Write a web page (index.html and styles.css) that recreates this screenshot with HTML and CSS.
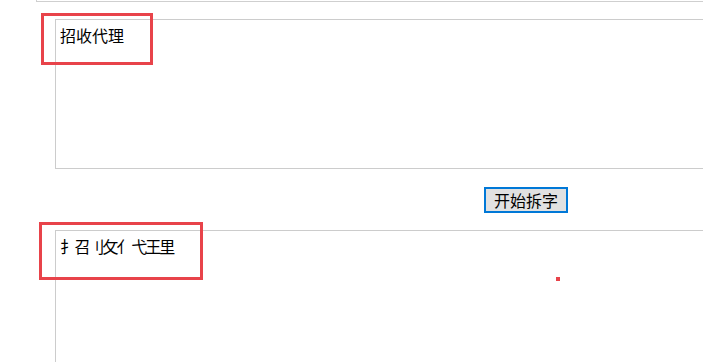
FILE: index.html
```html
<!DOCTYPE html>
<html lang="zh">
<head>
<meta charset="utf-8">
<title>拆字</title>
<link rel="stylesheet" href="styles.css">
</head>
<body>
<div class="page">
  <div class="prev-field"></div>
  <textarea class="field field-input">招收代理</textarea>
  <div class="actions">
    <button class="split-btn" type="button">开始拆字</button>
  </div>
  <textarea class="field field-output">扌 召刂攵亻 弋王里</textarea>

  <div class="mark mark-input"></div>
  <div class="mark mark-output"></div>
  <div class="dot"></div>
</div>
</body>
</html>
```

FILE: styles.css
```css
html, body {
  margin: 0;
  padding: 0;
  background: #ffffff;
  overflow: hidden;
}

.page {
  position: relative;
  width: 703px;
  height: 362px;
  overflow: hidden;
  font-family: "Noto Sans CJK SC", "Noto Sans", sans-serif;
}

.prev-field {
  margin-left: 36px;
  width: 800px;
  height: 1px;
  border-left: 1px solid #cfcfcf;
  border-bottom: 1px solid #cfcfcf;
}

.field {
  display: block;
  box-sizing: border-box;
  margin-left: 55px;
  width: 700px;
  border: 1px solid #cccccc;
  padding: 4px 4px;
  font-family: "Noto Sans CJK SC", sans-serif;
  font-size: 16px;
  line-height: 22px;
  color: #000000;
  background: #ffffff;
  resize: none;
  outline: none;
}

.field-input {
  margin-top: 17px;
  height: 150px;
}

.field-output {
  margin-top: 17px;
  height: 200px;
  letter-spacing: -2px;
  word-spacing: -1px;
}

.actions {
  display: flex;
  margin-top: 18px;
  padding-left: 484px;
}

.split-btn {
  box-sizing: border-box;
  height: 26px;
  padding: 0 8px;
  border: 2px solid #0078d7;
  background: #e1e1e1;
  font-family: "Noto Sans CJK SC", sans-serif;
  font-size: 16px;
  line-height: 20px;
  color: #000000;
  margin: 0;
}

.mark {
  position: absolute;
  box-sizing: border-box;
  border: 3px solid #e8434a;
}

.mark-input {
  left: 41px;
  top: 13px;
  width: 112px;
  height: 52px;
}

.mark-output {
  left: 39px;
  top: 222px;
  width: 164px;
  height: 58px;
}

.dot {
  position: absolute;
  left: 556px;
  top: 277px;
  width: 4px;
  height: 4px;
  background: #e8434a;
}
```
